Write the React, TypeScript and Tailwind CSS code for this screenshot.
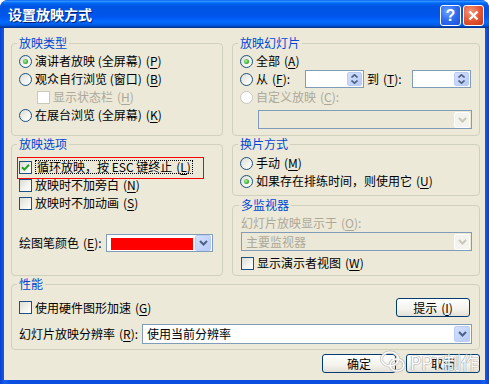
import clsx from "clsx";
import { ReactNode } from "react";

const Mn = ({ k }: { k: string }) => (
  <span className="ml-[4px]">
    (<span className="underline underline-offset-[2px]">{k}</span>)
  </span>
);

const Radio = ({ checked, disabled }: { checked?: boolean; disabled?: boolean }) => (
  <span
    className={clsx(
      "w-[13px] h-[13px] rounded-full border shrink-0 flex items-center justify-center",
      disabled
        ? "border-[#CAC8BB] bg-white"
        : "border-[#1C5180] bg-[linear-gradient(135deg,#DCDCD7_0%,#F4F4F0_60%,#FFFFFF_100%)]"
    )}
  >
    {checked && (
      <span className="w-[5px] h-[5px] rounded-full bg-[radial-gradient(circle_at_40%_40%,#B4F09C_0%,#21A121_75%)]" />
    )}
  </span>
);

const Check = ({ checked, disabled }: { checked?: boolean; disabled?: boolean }) => (
  <span
    className={clsx(
      "w-[13px] h-[13px] border shrink-0 flex items-center justify-center",
      disabled
        ? "border-[#CAC8BB] bg-white"
        : "border-[#1C5180] bg-[linear-gradient(135deg,#DCDCD7_0%,#F4F4F0_60%,#FFFFFF_100%)]"
    )}
  >
    {checked && (
      <svg width="9" height="9" viewBox="0 0 9 9">
        <path d="M1 4.2 L3.4 6.6 L8 1.8" stroke="#21A121" strokeWidth="2" fill="none" />
      </svg>
    )}
  </span>
);

const DropBtn = ({ disabled }: { disabled?: boolean }) => (
  <span
    className={clsx(
      "w-[16px] h-[16px] m-[1px] shrink-0 flex items-center justify-center border rounded-[2px]",
      disabled
        ? "bg-[#F4F3EE] border-white"
        : "bg-[linear-gradient(135deg,#D4E0FD_0%,#B7CBF8_100%)] border-[#BACCF5]"
    )}
  >
    <svg width="9" height="6" viewBox="0 0 9 6">
      <path
        d="M1 1 L4.5 4.5 L8 1"
        stroke={disabled ? "#C9C7BA" : "#4D6185"}
        strokeWidth="2"
        fill="none"
      />
    </svg>
  </span>
);

const Combo = ({
  className,
  children,
  disabled,
}: {
  className?: string;
  children?: ReactNode;
  disabled?: boolean;
}) => (
  <div
    className={clsx(
      "flex items-center justify-between border border-[#7F9DB9]",
      disabled ? "bg-[#EBE8D7] text-[#ACA899]" : "bg-white",
      className
    )}
  >
    <div className="pl-[4px] flex-1 leading-[16px]">{children}</div>
    <DropBtn disabled={disabled} />
  </div>
);

const Spin = () => (
  <div className="w-[59px] h-[18px] shrink-0 border border-[#7F9DB9] bg-white flex justify-end">
    <span className="w-[15px] h-[14px] m-[1px] rounded-[2px] bg-[linear-gradient(135deg,#D4E0FD_0%,#B7CBF8_100%)] border border-[#BACCF5] flex flex-col items-center justify-center gap-[2px]">
      <svg width="7" height="4" viewBox="0 0 7 4">
        <path d="M0.5 3.5 L3.5 0.8 L6.5 3.5" stroke="#4D6185" strokeWidth="1.6" fill="none" />
      </svg>
      <svg width="7" height="4" viewBox="0 0 7 4">
        <path d="M0.5 0.5 L3.5 3.2 L6.5 0.5" stroke="#4D6185" strokeWidth="1.6" fill="none" />
      </svg>
    </span>
  </div>
);

const Group = ({
  title,
  className,
  children,
}: {
  title: string;
  className?: string;
  children?: ReactNode;
}) => (
  <fieldset className={clsx("min-w-0 border border-[#D0D0BF] rounded-[4px] px-[7px]", className)}>
    <legend className="-ml-[2px] px-[2px] leading-[14px] text-[#0046D5]">{title}</legend>
    {children}
  </fieldset>
);

const Row = ({ className, children }: { className?: string; children?: ReactNode }) => (
  <div className={clsx("h-[18px] flex items-center gap-[3px]", className)}>{children}</div>
);

const XpButton = ({ className, children }: { className?: string; children?: ReactNode }) => (
  <button className="h-[19px] w-[74px] border border-[#003C74] rounded-[3px] bg-[linear-gradient(to_bottom,#FFFFFF_0%,#F3F2EC_60%,#E3E1D6_100%)] leading-[17px] text-black">
    <span className={className}>{children}</span>
  </button>
);

export default function App() {
  return (
    <div className="w-[489px] h-[384px] bg-white overflow-hidden font-['Noto_Sans_CJK_SC',sans-serif] text-[12px] text-black">
      <div className="w-full h-full rounded-t-[8px] overflow-hidden flex flex-col bg-[linear-gradient(to_right,#0840D6_0%,#1660EC_1%,#0A4FE0_2%,#0A4FE0_98%,#1660EC_99%,#0840D6_100%)]">
        <div className="h-[28px] shrink-0 flex items-center pl-[8px] pr-[5px] bg-[linear-gradient(to_bottom,#0058EE_0%,#3593FF_4%,#288EFF_6%,#127DFF_8%,#036FFC_10%,#0262EE_14%,#0057E5_20%,#0054E3_24%,#0055EB_56%,#005BF5_66%,#026AFE_76%,#0062EF_86%,#0052D6_92%,#0040AB_96%,#003092_100%)]">
          <span className="text-white font-bold text-[14px] leading-[18px] [text-shadow:1px_1px_0_#0A1E6E]">
            设置放映方式
          </span>
          <div className="ml-auto mt-[3px] flex gap-[2px]">
            <span className="w-[21px] h-[21px] rounded-[3px] border border-white bg-[radial-gradient(circle_at_35%_30%,#6FA2FF_0%,#2E6BEF_50%,#1A4FD8_100%)] flex items-center justify-center text-white font-bold text-[16px] leading-none font-['Liberation_Sans',sans-serif]">
              ?
            </span>
            <span className="w-[21px] h-[21px] rounded-[3px] border border-white bg-[radial-gradient(circle_at_35%_30%,#F39A7D_0%,#E2532E_55%,#C8391A_100%)] flex items-center justify-center">
              <svg width="11" height="11" viewBox="0 0 11 11">
                <path d="M1.5 1.5 L9.5 9.5 M9.5 1.5 L1.5 9.5" stroke="white" strokeWidth="2.4" />
              </svg>
            </span>
          </div>
        </div>

        <div className="relative flex-1 mx-[4px] mb-[4px] bg-[#ECE9D8] pl-[7px] pr-[5px] pt-[8px] flex flex-col">
          <div className="flex gap-[9px]">
            <div className="w-[212px] flex flex-col gap-[1px]">
              <Group title="放映类型" className="h-[100px]">
                <div className="pt-[2px]">
                  <Row>
                    <Radio checked />
                    <span>
                      演讲者放映 (全屏幕)
                      <Mn k="P" />
                    </span>
                  </Row>
                  <Row>
                    <Radio />
                    <span>
                      观众自行浏览 (窗口)
                      <Mn k="B" />
                    </span>
                  </Row>
                  <Row className="pl-[18px]">
                    <Check disabled />
                    <span className="text-[#ACA899]">
                      显示状态栏
                      <Mn k="H" />
                    </span>
                  </Row>
                  <Row>
                    <Radio />
                    <span>
                      在展台浏览 (全屏幕)
                      <Mn k="K" />
                    </span>
                  </Row>
                </div>
              </Group>

              <Group title="放映选项" className="h-[139px]">
                <div className="pt-[7px]">
                  <Row className="relative">
                    <Check checked />
                    <span className="border border-dotted border-black px-[1px] leading-[12px]">
                      循环放映，按 ESC 键终止
                      <Mn k="L" />
                    </span>
                    <span className="absolute -left-[2px] -top-[1px] w-[187px] h-[22px] border border-[#FF0000]" />
                  </Row>
                  <Row>
                    <Check />
                    <span>
                      放映时不加旁白
                      <Mn k="N" />
                    </span>
                  </Row>
                  <Row>
                    <Check />
                    <span>
                      放映时不加动画
                      <Mn k="S" />
                    </span>
                  </Row>
                  <div className="mt-[22px] flex items-center">
                    <span>
                      绘图笔颜色
                      <Mn k="E" />:
                    </span>
                    <div className="ml-auto mr-[2px] w-[107px] h-[18px] border border-[#7F9DB9] bg-white flex items-center">
                      <span className="ml-[4px] mt-[2px] w-[82px] h-[12px] bg-[#FF0000]" />
                      <span className="ml-auto">
                        <DropBtn />
                      </span>
                    </div>
                  </div>
                </div>
              </Group>
            </div>

            <div className="w-[248px] flex flex-col">
              <Group title="放映幻灯片" className="h-[100px]">
                <div className="pt-[2px]">
                  <Row>
                    <Radio checked />
                    <span>
                      全部
                      <Mn k="A" />
                    </span>
                  </Row>
                  <Row>
                    <Radio />
                    <span className="w-[46px] shrink-0">
                      从<Mn k="F" />:
                    </span>
                    <Spin />
                    <span className="w-[42px] shrink-0">
                      到<Mn k="T" />:
                    </span>
                    <Spin />
                  </Row>
                  <Row>
                    <Radio disabled />
                    <span className="text-[#ACA899]">
                      自定义放映
                      <Mn k="C" />:
                    </span>
                  </Row>
                  <Combo disabled className="mt-[4px] ml-[18px] w-[214px] h-[19px]" />
                </div>
              </Group>

              <Group title="换片方式" className="mt-[1px] h-[59px]">
                <div className="pt-[3px]">
                  <Row>
                    <Radio />
                    <span>
                      手动
                      <Mn k="M" />
                    </span>
                  </Row>
                  <Row>
                    <Radio checked />
                    <span>
                      如果存在排练时间，则使用它
                      <Mn k="U" />
                    </span>
                  </Row>
                </div>
              </Group>

              <Group title="多监视器" className="mt-[2px] h-[78px] pl-[8px]">
                <div className="pt-[2px]">
                  <Row className="text-[#ACA899]">
                    <span>
                      幻灯片放映显示于
                      <Mn k="O" />:
                    </span>
                  </Row>
                  <Combo disabled className="w-[231px] h-[19px]">
                    主要监视器
                  </Combo>
                  <Row className="mt-[3px]">
                    <Check />
                    <span>
                      显示演示者视图
                      <Mn k="W" />
                    </span>
                  </Row>
                </div>
              </Group>
            </div>
          </div>

          <Group title="性能" className="mt-[1px] h-[73px]">
            <div className="pt-[7px] flex items-center justify-between h-[26px]">
              <Row>
                <Check />
                <span>
                  使用硬件图形加速
                  <Mn k="G" />
                </span>
              </Row>
              <span className="mr-[2px]">
                <XpButton>
                  提示
                  <Mn k="I" />
                </XpButton>
              </span>
            </div>
            <div className="mt-[7px] flex items-center">
              <span>
                幻灯片放映分辨率
                <Mn k="R" />:
              </span>
              <Combo className="ml-auto w-[330px] h-[20px]">使用当前分辨率</Combo>
            </div>
          </Group>

          <div className="mt-[4px] flex justify-end gap-[10px]">
            <XpButton>确定</XpButton>
            <XpButton>取消</XpButton>
          </div>

          <div className="absolute right-[6px] bottom-[6px] flex items-center gap-[4px] opacity-90 pointer-events-none">
            <svg width="26" height="24" viewBox="0 0 26 24">
              <g fill="none" stroke="#B8B8B8" strokeWidth="3">
                <ellipse cx="10" cy="9" rx="8.5" ry="7" />
                <ellipse cx="17" cy="15" rx="7" ry="6" />
              </g>
              <g fill="none" stroke="white" strokeWidth="1.6">
                <ellipse cx="10" cy="9" rx="8.5" ry="7" />
                <ellipse cx="17" cy="15" rx="7" ry="6" />
              </g>
              <circle cx="7" cy="8" r="1.2" fill="white" />
              <circle cx="13" cy="8" r="1.2" fill="white" />
            </svg>
            <span className="text-white text-[18px] leading-[20px] font-['Noto_Sans_CJK_SC',sans-serif] [text-shadow:0_0_1px_#777,0_0_1px_#777]">
              PPT制作
            </span>
          </div>
        </div>
      </div>
    </div>
  );
}
